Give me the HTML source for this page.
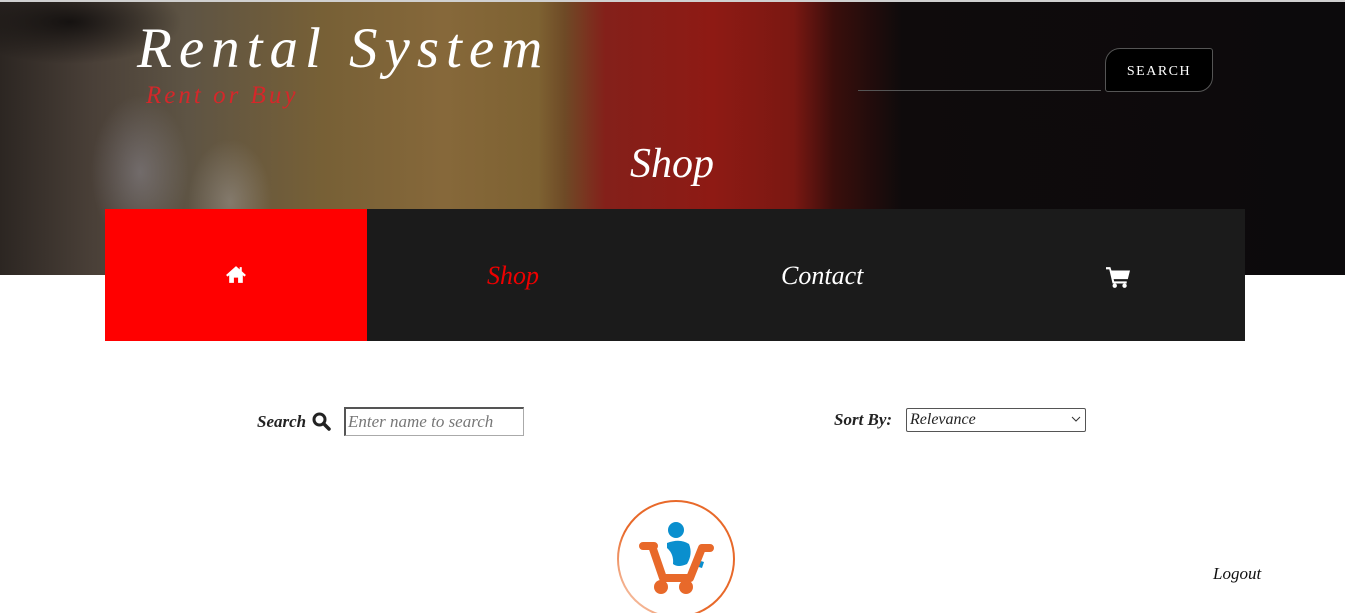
<!DOCTYPE html>
<html><head><meta charset="utf-8"><style>
*{margin:0;padding:0;box-sizing:border-box}
body{width:1345px;height:613px;overflow:hidden;background:#fff;font-family:"Liberation Serif",serif;position:relative}
.hero{position:absolute;left:0;top:0;width:1345px;height:275px;border-top:2px solid #d0d0d0;
background:
radial-gradient(ellipse 70px 110px at 140px 170px,rgba(170,170,190,.35),transparent 70%),
radial-gradient(ellipse 60px 90px at 230px 200px,rgba(200,200,210,.3),transparent 70%),
radial-gradient(ellipse 160px 60px at 70px 20px,rgba(10,8,8,.8),transparent 70%),
linear-gradient(90deg,#2c2622 0%,#4a4038 7%,#5e5444 14%,#776036 24%,#86683a 33%,#7e6232 40%,#6e4a26 42%,#84201a 45%,#8e1a14 53%,#7a1812 59%,#3a0e0c 62%,#0f0b0c 67%,#0c0a0c 100%);}
.title{position:absolute;left:137px;top:16px;color:#fff;font-style:italic;font-size:57px;letter-spacing:7px}
.sub{position:absolute;left:146px;top:82px;color:#d5272a;font-style:italic;font-size:25px;letter-spacing:3px}
.sline{position:absolute;left:858px;top:90px;width:243px;height:1px;background:#555}
.sbtn{position:absolute;left:1105px;top:48px;width:108px;height:44px;background:#000;border:1px solid #555;border-radius:15px 3px 15px 3px;color:#fff;font-size:14px;letter-spacing:1.5px;text-align:center;line-height:45px}
.shop{position:absolute;left:630px;top:140px;color:#fff;font-style:italic;font-size:42px}
.nav{position:absolute;left:105px;top:209px;width:1140px;height:132px;background:#1b1b1b}
.home{position:absolute;left:0;top:0;width:262px;height:132px;background:#f00}
.nav .t{position:absolute;top:52px;font-style:italic;font-size:26px}
.lbl{position:absolute;font-weight:bold;font-style:italic;font-size:17px;color:#222}
.inp{position:absolute;left:344px;top:407px;width:180px;height:29px;border:1px solid #aaa;border-top:2px solid #555;border-left:2px solid #555;color:#777;font-style:italic;font-size:17px;padding:3px 0 0 2px}
.sel{position:absolute;left:906px;top:408px;width:180px;height:24px;border:1px solid #555;border-radius:2px;font-style:italic;font-size:16px;color:#222;padding:2px 0 0 3px}
</style></head><body>
<div class="hero"></div>
<div class="title">Rental System</div>
<div class="sub">Rent or Buy</div>
<div class="sline"></div>
<div class="sbtn">SEARCH</div>
<div class="shop">Shop</div>
<div class="nav">
<div class="home"><svg style="position:absolute;left:120px;top:56px" width="22" height="19" viewBox="0 0 21 18"><path d="M10.5 1 L1 9.5 L2.5 11 L4 9.7 V17 H8.5 V12 H12.5 V17 H17 V9.7 L18.5 11 L20 9.5 L16 5.9 V2 H14 V4.1 Z" fill="#fff"/></svg></div>
<div class="t" style="left:382px;color:#e00">Shop</div>
<div class="t" style="left:676px;color:#fff">Contact</div>
<svg style="position:absolute;left:1001px;top:57px" width="24" height="22" viewBox="0 0 22 20"><path d="M0 1 H4 L5 4 H22 L20 12 H7 L7.5 14 H19 V16 H6 L3 3 H0 Z" fill="#fff"/><circle cx="8" cy="18" r="2" fill="#fff"/><circle cx="17" cy="18" r="2" fill="#fff"/></svg>
</div>
<div class="lbl" style="left:257px;top:412px">Search</div>
<svg style="position:absolute;left:312px;top:412px" width="19" height="19" viewBox="0 0 19 19"><circle cx="7.5" cy="7.5" r="5.5" fill="none" stroke="#222" stroke-width="3"/><path d="M11.5 11.5 L17 17" stroke="#222" stroke-width="3.5" stroke-linecap="round"/></svg>
<div class="inp">Enter name to search</div>
<div class="lbl" style="left:834px;top:410px">Sort By:</div>
<div class="sel">Relevance<svg style="position:absolute;right:4px;top:7px" width="10" height="6" viewBox="0 0 10 6"><path d="M1 1 L5 5 L9 1" fill="none" stroke="#333"/></svg></div>
<svg style="position:absolute;left:610px;top:498px" width="130" height="115" viewBox="0 0 130 115">
<defs><linearGradient id="g" x1="1" y1="0" x2="0" y2="1"><stop offset="0" stop-color="#e8692a"/><stop offset=".6" stop-color="#e8692a"/><stop offset="1" stop-color="#fbe0d0"/></linearGradient></defs>
<circle cx="66" cy="61" r="58" fill="none" stroke="url(#g)" stroke-width="2"/>
<circle cx="66" cy="32" r="8" fill="#0a8fce"/>
<path d="M57 45 Q70 40 79 46 Q83 56 77 66 Q68 70 63 66 Q64 56 57 50 Z" fill="#0a8fce"/>
<path d="M84 61 L94 64 L92 70 L82 67 Z" fill="#0a8fce"/>
<path d="M33 48 H44 M42 48 L53 80 H80 L92 50 H100" fill="none" stroke="#e8692a" stroke-width="8" stroke-linecap="round" stroke-linejoin="round"/>
<circle cx="51" cy="89" r="7" fill="#e8692a"/><circle cx="76" cy="89" r="7" fill="#e8692a"/>
</svg>
<div style="position:absolute;left:1213px;top:564px;font-style:italic;font-size:17px;color:#111">Logout</div>
</body></html>
